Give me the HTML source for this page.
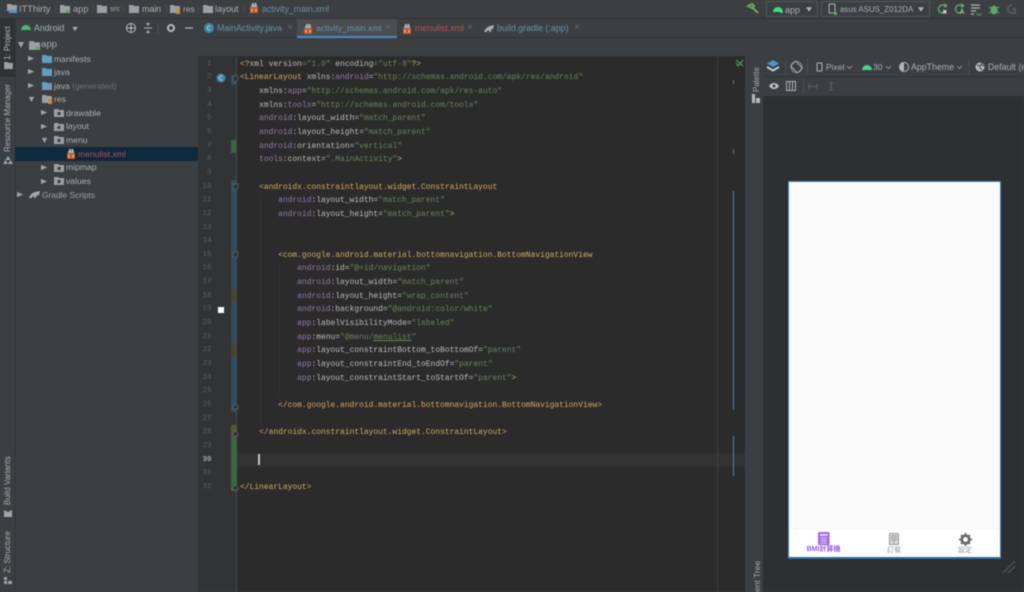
<!DOCTYPE html>
<html><head><meta charset="utf-8">
<style>
html,body{margin:0;padding:0;background:#3c3f41}
#r{position:relative;width:1024px;height:592px;overflow:hidden;background:#3c3f41;font-family:"Liberation Sans",sans-serif;color:#a9b0b4;filter:blur(.45px)}
.a{position:absolute}
.t{position:absolute;white-space:pre;font-size:8.6px;line-height:12px;color:#a9afb2}
.v{position:absolute;white-space:pre;font-size:8px;line-height:10px;color:#a9afb2;transform-origin:0 0;transform:rotate(-90deg)}
.l{position:absolute;left:240px;height:13.65px;white-space:pre;font:7.95px/13.65px "Liberation Mono",monospace;color:#bcbcbc}
.n{position:absolute;left:198px;width:13.5px;text-align:right;height:13.65px;font:7.5px/13.65px "Liberation Mono",monospace;color:#5c6062}
.g{color:#d2ab60}.p{color:#9579a9}.s{color:#668555}
svg{position:absolute;overflow:visible}
</style></head><body><div id="r">
<svg width="0" height="0" style="position:absolute"><defs>
<symbol id="fb" viewBox="0 0 10 8"><path d="M0 0h4l1 1h5v7H0z" fill="#5f9fc4"/></symbol>
<symbol id="fg" viewBox="0 0 10 8"><path d="M0 0h4l1 1h5v7H0z" fill="#9aa0a4"/></symbol>
<symbol id="fp" viewBox="0 0 10 8"><path d="M0 0h4l1 1h5v7H0z" fill="#9aa0a4"/><rect x="3.500" y="3" width="3" height="3" fill="#3c3f41"/></symbol>
<symbol id="x" viewBox="0 0 10 10"><path d="M1 4h8v6H1z" fill="#c75a2a"/><path d="M3 0h2v3H3zM5.500 0h2v3h-2zM2 2h6v2H2z" fill="#a9b0b4"/><path d="M3.500 6l-1 1.200 1 1.200M6.500 6l1 1.200-1 1.200" stroke="#fff" stroke-width=".6" fill="none"/></symbol>
<symbol id="tl" viewBox="0 0 8 8"><path d="M0 1l7 3-7 3z" fill="#9ea4a8"/></symbol>
<symbol id="td" viewBox="0 0 8 8"><path d="M1 1h6l-3 6z" fill="#9ea4a8"/></symbol>
</defs></svg>

<!-- breadcrumb -->
<div class="a" style="left:0;top:18px;width:1024px;height:1px;background:#2f3133"></div>
<svg style="left:7px;top:4px" width="11" height="10"><path d="M0 0h4l1 1h5v6H0z" fill="#9aa0a4"/><rect x="2" y="6" width="8" height="3" fill="#4f93c7"/></svg>
<div class="t" style="left:19px;top:3px;font-size:9.300px">ITThirty</div>
<svg style="left:60px;top:5px;width:10px;height:8px"><use href="#fg"/><rect x="6" y="5" width="3" height="3" fill="#4caf50"/></svg>
<div class="t" style="left:73px;top:3px;font-size:9.300px">app</div>
<svg style="left:97px;top:5px;width:10px;height:8px"><use href="#fg"/></svg>
<div class="t" style="left:110px;top:3px;font-size:7.500px">src</div>
<svg style="left:129px;top:5px;width:10px;height:8px"><use href="#fg"/></svg>
<div class="t" style="left:142px;top:3px;font-size:8.800px">main</div>
<svg style="left:170px;top:5px;width:10px;height:8px"><use href="#fg"/><rect x="6" y="4" width="4" height="5" fill="#c98a3a"/></svg>
<div class="t" style="left:183px;top:3px;font-size:8.500px">res</div>
<svg style="left:203px;top:5px;width:10px;height:8px"><use href="#fg"/></svg>
<div class="t" style="left:215px;top:3px;font-size:8.800px">layout</div>
<svg style="left:249px;top:3px;width:10px;height:10px"><use href="#x"/></svg>
<div class="t" style="left:262px;top:3px;font-size:8.800px;color:#6a8fa8">activity_main.xml</div>
<svg style="left:0;top:0" width="250" height="18"><path d="M54 5l2 4-2 4M92 5l2 4-2 4M122 5l2 4-2 4M165 5l2 4-2 4M197 5l2 4-2 4M243 5l2 4-2 4" stroke="#4f5356" fill="none" stroke-width=".7"/></svg>

<!-- top right toolbar -->
<svg style="left:747px;top:3px" width="14" height="12"><path d="M1 3l4-2 2 2-2 2zM5 4l6 6" stroke="#6aa85a" stroke-width="2" fill="none"/></svg>
<div class="a" style="left:766px;top:1px;width:50px;height:14px;border:1px solid #55595c;border-radius:2px"></div>
<svg style="left:772px;top:4px" width="12" height="9"><path d="M1 8a5 5 0 0 1 10 0z" fill="#3ddc84"/><rect x="8" y="7" width="2.500" height="2" fill="#3ddc84"/></svg>
<div class="t" style="left:785px;top:4px;font-size:9px">app</div>
<svg style="left:806px;top:7px;width:6px;height:5px" viewBox="0 0 8 6"><path d="M0 0h8l-4 6z" fill="#aeb3b6"/></svg>
<div class="a" style="left:821px;top:1px;width:107px;height:14px;border:1px solid #55595c;border-radius:2px"></div>
<svg style="left:828px;top:3px" width="10" height="12"><rect x="1" y="1" width="6" height="9" rx="1" stroke="#aeb3b6" fill="none"/><rect x="6" y="9" width="3" height="3" fill="#4caf50"/></svg>
<div class="t" style="left:840px;top:4px;font-size:7.900px">asus ASUS_Z012DA</div>
<svg style="left:918px;top:7px;width:6px;height:5px" viewBox="0 0 8 6"><path d="M0 0h8l-4 6z" fill="#aeb3b6"/></svg>
<svg style="left:936px;top:3px" width="80" height="13">
<path d="M10 4a4 4 0 1 0 0 4" stroke="#59a869" stroke-width="1.400" fill="none"/><path d="M8 0l4 3-4 2z" fill="#59a869"/><rect x="7" y="7" width="3.500" height="3.500" fill="#c4c8ca"/>
<path d="M27 4a4 4 0 1 0 0 4" stroke="#59a869" stroke-width="1.400" fill="none"/><path d="M25 0l4 3-4 2z" fill="#59a869"/>
<path d="M24 11l2-5 2 5" stroke="#aeb3b6" fill="none" stroke-width=".8"/>
<path d="M35 2h9M35 5h9M35 8h5M35 11h3" stroke="#aeb3b6" stroke-width="1.200"/><path d="M41 10a2 2 0 0 0 4 0" stroke="#59a869" fill="none"/>
<ellipse cx="58" cy="7" rx="3.500" ry="4.500" fill="#59a869"/><path d="M53 4l2 1M63 4l-2 1M53 10l2-1M63 10l-2-1" stroke="#59a869"/>
</svg>
<svg style="left:1005px;top:3px" width="12" height="12"><path d="M7 2a4 4 0 1 0 0 8h3V6H7" stroke="#55595c" stroke-width="2" fill="none"/></svg>

<!-- left strip -->
<div class="a" style="left:0;top:19px;width:15px;height:58px;background:#2f3234"></div>
<div class="a" style="left:15px;top:19px;width:1px;height:573px;background:#323537"></div>
<div class="v" style="left:3px;top:60px;color:#b5babd">1: Project</div>
<svg style="left:4px;top:62px;width:9px;height:7px"><use href="#fg"/></svg>
<div class="v" style="left:3px;top:152px">Resource Manager</div>
<svg style="left:3px;top:156px" width="10" height="8"><path d="M5 0l2.500 4h-5zM0 8l2.500-4L5 8zM5 8l2.500-4L10 8z" fill="#9ea4a8"/></svg>
<div class="v" style="left:3px;top:505px">Build Variants</div>
<svg style="left:4px;top:510px" width="8" height="7"><path d="M0 0l4 2 4-2v7H0z" fill="#9ea4a8"/></svg>
<div class="v" style="left:3px;top:573px">Z: Structure</div>
<svg style="left:4px;top:577px" width="8" height="8"><path d="M0 0h3v3H0zM0 4h3v3H0zM4 4h4v3H4z" fill="#9ea4a8"/></svg>

<!-- project panel header -->
<svg style="left:21px;top:24px" width="10" height="7"><path d="M0 6a5 5 0 0 1 10 0z" fill="#4fb573"/></svg>
<div class="t" style="left:34px;top:22px;font-size:8.800px">Android</div>
<svg style="left:72px;top:27px;width:6px;height:4px" viewBox="0 0 8 6"><path d="M0 0h8l-4 6z" fill="#aeb3b6"/></svg>
<svg style="left:125px;top:22px" width="70" height="13">
<circle cx="6" cy="6" r="4.500" stroke="#b4b9bc" stroke-width="1" fill="none"/><circle cx="6" cy="6" r="1.500" fill="#b4b9bc"/><path d="M6 1v3M6 8v3M1 6h3M8 6h3" stroke="#b4b9bc"/>
<path d="M19 6h8" stroke="#b4b9bc"/><path d="M23 4l-2-3h4zM23 8l-2 3h4z" fill="#b4b9bc"/>
<path d="M33 1v11" stroke="#4f5356"/>
<circle cx="46" cy="6" r="3" stroke="#b4b9bc" stroke-width="2" fill="none"/>
<path d="M60 6h8" stroke="#b4b9bc" stroke-width="1.200"/>
</svg>

<!-- tree -->
<div class="a" style="left:15px;top:147px;width:183px;height:14px;background:#0e293e"></div>
<svg style="left:17px;top:41px;width:8px;height:8px"><use href="#td"/></svg>
<svg style="left:29px;top:41px;width:11px;height:9px"><use href="#fg"/><rect x="7" y="6" width="3" height="3" fill="#4caf50"/></svg>
<div class="t" style="left:41px;top:39px;font-size:9.600px">app</div>

<svg style="left:28px;top:55px;width:7px;height:7px"><use href="#tl"/></svg>
<svg style="left:42px;top:55px;width:10px;height:8px"><use href="#fb"/></svg>
<div class="t" style="left:54px;top:53px">manifests</div>
<svg style="left:28px;top:68px;width:7px;height:7px"><use href="#tl"/></svg>
<svg style="left:42px;top:68px;width:10px;height:8px"><use href="#fb"/></svg>
<div class="t" style="left:54px;top:66px">java</div>
<svg style="left:28px;top:82px;width:7px;height:7px"><use href="#tl"/></svg>
<svg style="left:42px;top:82px;width:10px;height:8px"><use href="#fb"/><circle cx="7" cy="6" r="2" fill="#8c9196"/></svg>
<div class="t" style="left:54px;top:80px">java <span style="color:#6c7174">(generated)</span></div>
<svg style="left:28px;top:96px;width:7px;height:7px"><use href="#td"/></svg>
<svg style="left:42px;top:95px;width:10px;height:8px"><use href="#fg"/><rect x="6" y="4" width="4" height="5" fill="#c98a3a"/></svg>
<div class="t" style="left:54px;top:93px">res</div>
<svg style="left:41px;top:109px;width:7px;height:7px"><use href="#tl"/></svg>
<svg style="left:54px;top:109px;width:10px;height:8px"><use href="#fp"/></svg>
<div class="t" style="left:66px;top:107px">drawable</div>
<svg style="left:41px;top:123px;width:7px;height:7px"><use href="#tl"/></svg>
<svg style="left:54px;top:123px;width:10px;height:8px"><use href="#fp"/></svg>
<div class="t" style="left:66px;top:120px">layout</div>
<svg style="left:41px;top:137px;width:7px;height:7px"><use href="#td"/></svg>
<svg style="left:54px;top:136px;width:10px;height:8px"><use href="#fp"/></svg>
<div class="t" style="left:66px;top:134px">menu</div>
<svg style="left:66px;top:149px;width:10px;height:10px"><use href="#x"/></svg>
<div class="t" style="left:78px;top:148px;color:#b5534f">menulist.xml</div>
<svg style="left:41px;top:164px;width:7px;height:7px"><use href="#tl"/></svg>
<svg style="left:54px;top:164px;width:10px;height:8px"><use href="#fp"/></svg>
<div class="t" style="left:66px;top:161px">mipmap</div>
<svg style="left:41px;top:178px;width:7px;height:7px"><use href="#tl"/></svg>
<svg style="left:54px;top:177px;width:10px;height:8px"><use href="#fp"/></svg>
<div class="t" style="left:66px;top:175px">values</div>
<svg style="left:17px;top:191px;width:7px;height:7px"><use href="#tl"/></svg>
<svg style="left:29px;top:190px" width="12" height="9"><path d="M0 8c1-3 3-5 6-6l5-1-1 4-3 1v2H5V6L3 7v1z" fill="#a4aaad"/></svg>
<div class="t" style="left:42px;top:189px;color:#9ba1a4;font-size:8.400px">Gradle Scripts</div>

<!-- tabs -->
<div class="a" style="left:198px;top:18px;width:826px;height:1px;background:#2f3133"></div>
<div class="a" style="left:198px;top:37px;width:826px;height:1px;background:#323537"></div>
<div class="a" style="left:297px;top:19px;width:100px;height:19px;background:#4a4e50"></div>
<div class="a" style="left:297px;top:36px;width:100px;height:2px;background:#4a88c7"></div>
<svg style="left:204px;top:23px" width="10" height="10"><circle cx="5" cy="5" r="5" fill="#3f86a8"/><path d="M6.500 3.500a2 2 0 1 0 0 3" stroke="#d0e0e8" fill="none" stroke-width=".8"/></svg>
<div class="t" style="left:217px;top:22px;color:#6a8fa8;font-size:8.800px">MainActivity.java</div>
<svg style="left:303px;top:24px;width:10px;height:10px"><use href="#x"/></svg>
<div class="t" style="left:316px;top:22px;color:#6a8fa8;font-size:8.600px">activity_main.xml</div>
<svg style="left:402px;top:24px;width:10px;height:10px"><use href="#x"/></svg>
<div class="t" style="left:415px;top:22px;color:#b5534f;font-size:8.800px">menulist.xml</div>
<svg style="left:484px;top:25px" width="11" height="8"><path d="M0 7c1-3 3-5 6-6l4-1-1 4-2 1v2H5V5L3 6v1z" fill="#a4aaad"/></svg>
<div class="t" style="left:497px;top:22px;color:#6a8fa8;font-size:8.900px">build.gradle (:app)</div>
<svg style="left:0;top:0" width="600" height="40"><path d="M288 25l4 4m0-4l-4 4M386 25l4 4m0-4l-4 4M468 25l4 4m0-4l-4 4M575 25l4 4m0-4l-4 4" stroke="#65696c" stroke-width=".8"/></svg>

<!-- editor -->
<div class="a" style="left:198px;top:57px;width:39px;height:535px;background:#313335"></div>
<div class="a" style="left:237px;top:57px;width:508px;height:535px;background:#2b2b2b"></div>
<div class="a" style="left:198px;top:56px;width:547px;height:1px;background:#2e3032"></div>
<div class="a" style="left:237px;top:453px;width:508px;height:14px;background:#323232"></div>
<div class="a" style="left:236px;top:57px;width:1px;height:535px;background:#46494b"></div>
<div class="a" style="left:717px;top:57px;width:1px;height:535px;background:#3c3f41"></div>

<!-- gutter marks -->
<div class="a" style="left:231px;top:75px;width:5px;height:10px;background:#2e4d62"></div>
<div class="a" style="left:231px;top:140px;width:5px;height:13px;background:#3f6540"></div>
<div class="a" style="left:231px;top:180px;width:5px;height:232px;background:#2e4d62"></div>
<div class="a" style="left:231px;top:289px;width:5px;height:13px;background:#4a4331"></div>
<div class="a" style="left:231px;top:343px;width:5px;height:14px;background:#4a4331"></div>
<div class="a" style="left:231px;top:425px;width:6px;height:14px;background:#55573a"></div>
<div class="a" style="left:231px;top:439px;width:6px;height:52px;background:#3f6540"></div>
<svg style="left:216px;top:73px" width="10" height="10"><circle cx="5" cy="5" r="4.500" fill="#3f86a8"/><path d="M6.500 3.500a2 2 0 1 0 0 3" stroke="#d0e0e8" fill="none" stroke-width=".8"/></svg>
<div class="a" style="left:218px;top:307px;width:6px;height:6px;background:#fff"></div>
<svg style="left:232px;top:74px" width="8" height="420">
<path d="M1 2h5v4L3.500 8 1 6zM1 110h5v4l-2.500 2L1 114zM1 178h5v4l-2.500 2L1 182z" fill="#313335" stroke="#62676a" stroke-width=".7"/>
<path d="M1 335h5v-3l-2.500-2L1 332zM1 362h5v-3l-2.500-2L1 359zM1 416h5v-3l-2.500-2L1 413z" fill="#313335" stroke="#62676a" stroke-width=".7"/>
</svg>
<!-- indent guides -->
<div class="a" style="left:259.500px;top:194px;width:1px;height:231px;background:#343434"></div>
<div class="a" style="left:278.500px;top:262px;width:1px;height:137px;background:#343434"></div>

<!-- line numbers -->
<div class="n" style="top:57.700px">1</div><div class="n" style="top:71.350px">2</div><div class="n" style="top:85px">3</div><div class="n" style="top:98.650px">4</div><div class="n" style="top:112.300px">5</div><div class="n" style="top:125.950px">6</div><div class="n" style="top:139.600px">7</div><div class="n" style="top:153.250px">8</div><div class="n" style="top:166.900px">9</div><div class="n" style="top:180.550px">10</div><div class="n" style="top:194.200px">11</div><div class="n" style="top:207.850px">12</div><div class="n" style="top:221.500px">13</div><div class="n" style="top:235.150px">14</div><div class="n" style="top:248.800px">15</div><div class="n" style="top:262.450px">16</div><div class="n" style="top:276.100px">17</div><div class="n" style="top:289.750px">18</div><div class="n" style="top:303.400px">19</div><div class="n" style="top:317.050px">20</div><div class="n" style="top:330.700px">21</div><div class="n" style="top:344.350px">22</div><div class="n" style="top:358px">23</div><div class="n" style="top:371.650px">24</div><div class="n" style="top:385.300px">25</div><div class="n" style="top:398.950px">26</div><div class="n" style="top:412.600px">27</div><div class="n" style="top:426.250px">28</div><div class="n" style="top:439.900px">29</div><div class="n" style="top:453.550px;color:#a4a8aa;font-weight:700">30</div><div class="n" style="top:467.200px">31</div><div class="n" style="top:480.850px">32</div>

<!-- code -->
<div class="l" style="top:57.700px"><span class="g">&lt;?</span>xml version<span class="s">=</span><span class="s">"1.0"</span> encoding<span class="s">=</span><span class="s">"utf-8"</span><span class="g">?&gt;</span></div>
<div class="l" style="top:71.350px"><span class="g">&lt;LinearLayout</span> xmlns:<span class="p">android</span>=<span class="s">"http://schemas.android.com/apk/res/android"</span></div>
<div class="l" style="top:85px">    xmlns:<span class="p">app</span>=<span class="s">"http://schemas.android.com/apk/res-auto"</span></div>
<div class="l" style="top:98.650px">    xmlns:<span class="p">tools</span>=<span class="s">"http://schemas.android.com/tools"</span></div>
<div class="l" style="top:112.300px">    <span class="p">android</span>:layout_width=<span class="s">"match_parent"</span></div>
<div class="l" style="top:125.950px">    <span class="p">android</span>:layout_height=<span class="s">"match_parent"</span></div>
<div class="l" style="top:139.600px">    <span class="p">android</span>:orientation=<span class="s">"vertical"</span></div>
<div class="l" style="top:153.250px">    <span class="p">tools</span>:context=<span class="s">".MainActivity"</span><span class="g">&gt;</span></div>
<div class="l" style="top:180.550px">    <span class="g">&lt;androidx.constraintlayout.widget.ConstraintLayout</span></div>
<div class="l" style="top:194.200px">        <span class="p">android</span>:layout_width=<span class="s">"match_parent"</span></div>
<div class="l" style="top:207.850px">        <span class="p">android</span>:layout_height=<span class="s">"match_parent"</span><span class="g">&gt;</span></div>
<div class="l" style="top:248.800px">        <span class="g">&lt;com.google.android.material.bottomnavigation.BottomNavigationView</span></div>
<div class="l" style="top:262.450px">            <span class="p">android</span>:id=<span class="s">"@+id/navigation"</span></div>
<div class="l" style="top:276.100px">            <span class="p">android</span>:layout_width=<span class="s">"match_parent"</span></div>
<div class="l" style="top:289.750px">            <span class="p">android</span>:layout_height=<span class="s">"wrap_content"</span></div>
<div class="l" style="top:303.400px">            <span class="p">android</span>:background=<span class="s">"@android:color/white"</span></div>
<div class="l" style="top:317.050px">            <span class="p">app</span>:labelVisibilityMode=<span class="s">"labeled"</span></div>
<div class="l" style="top:330.700px">            <span class="p">app</span>:menu=<span class="s">"@menu/<u>menulist</u>"</span></div>
<div class="l" style="top:344.350px">            <span class="p">app</span>:layout_constraintBottom_toBottomOf=<span class="s">"parent"</span></div>
<div class="l" style="top:358px">            <span class="p">app</span>:layout_constraintEnd_toEndOf=<span class="s">"parent"</span></div>
<div class="l" style="top:371.650px">            <span class="p">app</span>:layout_constraintStart_toStartOf=<span class="s">"parent"</span><span class="g">&gt;</span></div>
<div class="l" style="top:398.950px">        <span class="g">&lt;/com.google.android.material.bottomnavigation.BottomNavigationView&gt;</span></div>
<div class="l" style="top:426.250px">    <span class="g">&lt;/androidx.constraintlayout.widget.ConstraintLayout&gt;</span></div>
<div class="l" style="top:480.850px"><span class="g">&lt;/LinearLayout&gt;</span></div>
<div class="a" style="left:258px;top:454px;width:1.500px;height:11px;background:#c4c4c4"></div>

<!-- error stripe -->
<svg style="left:736px;top:59px" width="8" height="8"><path d="M0 4l2 3 5-6M0 1l7 6" stroke="#59a869" fill="none" stroke-width="1"/></svg>
<div class="a" style="left:733px;top:80px;width:1px;height:4px;background:#4a82b2"></div>
<div class="a" style="left:733px;top:149px;width:1px;height:5px;background:#4d8a55"></div>
<div class="a" style="left:733px;top:191px;width:1px;height:219px;background:#4a82b2"></div>
<div class="a" style="left:733px;top:436px;width:1px;height:40px;background:#4a82b2"></div>

<!-- palette strip -->
<div class="a" style="left:745px;top:57px;width:18px;height:535px;background:#3c3f41"></div>
<div class="v" style="left:752px;top:92px;color:#a4aaad">Palette</div>
<svg style="left:752px;top:94px" width="9" height="9"><path d="M0 0h3v9H0zM4 4h4v5H4z" fill="#b4b9bc"/></svg>
<div class="v" style="left:752px;top:592px;color:#a4aaad;font-size:8.500px">ent Tree</div>

<!-- design area -->
<div class="a" style="left:763px;top:57px;width:261px;height:535px;background:#2d2f31"></div>
<div class="a" style="left:763px;top:57px;width:261px;height:39px;background:#3c3f41"></div>
<div class="a" style="left:763px;top:76px;width:261px;height:1px;background:#323537"></div>
<svg style="left:767px;top:60px" width="14" height="14"><path d="M6 0l6 3.500-6 3.500-6-3.500z" fill="#4e93cc"/><path d="M0 6l6 3.500 6-3.500v2l-6 3.500-6-3.500z" fill="#c6e0f2"/></svg>
<svg style="left:790px;top:61px" width="13" height="13"><rect x="3" y="1" width="7" height="10" rx="1" transform="rotate(-45 6.500 6)" stroke="#aeb3b6" fill="none"/><circle cx="6.500" cy="6" r="5.500" stroke="#aeb3b6" fill="none" stroke-width=".6"/></svg>
<div class="a" style="left:784.500px;top:59px;width:1px;height:15px;background:#4b4f52"></div>
<div class="a" style="left:806.500px;top:59px;width:1px;height:15px;background:#4b4f52"></div>
<svg style="left:816px;top:62px" width="8" height="10"><rect x="1" y="1" width="5" height="8" rx="1" stroke="#b4b9bc" fill="none"/></svg>
<div class="t" style="left:826px;top:61px;font-size:8.500px">Pixel</div>
<svg style="left:0;top:0" width="1024" height="80"><path d="M847 66l2.500 2.500L852 66M886 66l2.500 2.500L891 66M957 66l2.500 2.500L962 66" stroke="#9ea4a8" fill="none" stroke-width=".8"/></svg>
<svg style="left:862px;top:63px" width="10" height="7"><path d="M0 7a5 5 0 0 1 10 0z" fill="#3ddc84"/></svg>
<div class="t" style="left:873px;top:61px;font-size:8.500px">30</div>
<svg style="left:899px;top:62px" width="10" height="10"><circle cx="5" cy="5" r="4.500" stroke="#b4b9bc" fill="none"/><path d="M5 1a4 4 0 0 0 0 8z" fill="#b4b9bc"/></svg>
<div class="t" style="left:911px;top:61px;font-size:8.800px">AppTheme</div>
<div class="a" style="left:967.500px;top:59px;width:1px;height:15px;background:#4b4f52"></div>
<svg style="left:975px;top:62px" width="10" height="10"><circle cx="5" cy="5" r="4.500" fill="#b4b9bc"/><path d="M2 3l3 1v2l2 2M7 1L6 3l3 1" stroke="#3c3f41" fill="none"/></svg>
<div class="t" style="left:988px;top:61px;font-size:8.800px">Default (e</div>
<svg style="left:769px;top:82px" width="11" height="10"><path d="M0 4c3-4 7-4 10 0-3 4-7 4-10 0z" fill="#c2c6c9"/><circle cx="5" cy="4" r="1.500" fill="#3c3f41"/></svg>
<svg style="left:786px;top:81px" width="11" height="11"><path d="M.5.500h9v9h-9zM3.500.500v9M6.500.500v9" stroke="#a9aeb1" fill="none"/></svg>
<div class="a" style="left:802.500px;top:79px;width:1px;height:14px;background:#4b4f52"></div>
<svg style="left:808px;top:81px" width="30" height="11"><path d="M1 5.500h8M1 3v5M9 3v5" stroke="#606467" fill="none"/><path d="M23 1v8M21 2h4M21 9h4" stroke="#606467" fill="none"/></svg>

<!-- device preview -->
<div class="a" style="left:788px;top:181px;width:211px;height:375px;border:1px solid #3f86c4;border-bottom:2px solid #2d6a9f;background:#fafafa"></div>
<div class="a" style="left:789px;top:528.500px;width:211px;height:28px;background:#fff"></div>
<svg style="left:818px;top:532px" width="11.500" height="13"><rect width="11.500" height="13" rx="1" fill="#a065ea"/><rect x="2" y="2" width="7.500" height="2" fill="#e6d8fa"/><path d="M2 6h7.500M2 8.500h7.500M2 11h7.500M4.500 5.500v6M7 5.500v6" stroke="#e0cff8" stroke-width=".7"/></svg>
<div class="a" style="left:794px;top:545px;width:59px;text-align:center;font:700 7px/10px 'Liberation Sans','Noto Sans CJK TC',sans-serif;color:#9a5be6">BMI計算機</div>
<svg style="left:889px;top:533px" width="10" height="12"><rect x=".5" y=".5" width="9" height="11" fill="#d8d8d8" stroke="#9a9a9a"/><path d="M2 3h6M2 5h6M2 7h6M5 7v4" stroke="#9a9a9a"/></svg>
<div class="a" style="left:874px;top:546px;width:40px;text-align:center;font:7px/10px 'Liberation Sans','Noto Sans CJK TC',sans-serif;color:#9a9a9a">訂餐</div>
<svg style="left:959px;top:533px" width="13" height="13"><circle cx="6.500" cy="6.500" r="3.800" fill="none" stroke="#686868" stroke-width="2.800"/><path d="M6.500 0v2.500M6.500 10.500V13M0 6.500h2.500M10.500 6.500H13M2 2l1.700 1.700M9.300 9.300L11 11M11 2L9.300 3.700M3.700 9.300L2 11" stroke="#686868" stroke-width="1.800"/></svg>
<div class="a" style="left:945px;top:546px;width:40px;text-align:center;font:7px/10px 'Liberation Sans','Noto Sans CJK TC',sans-serif;color:#9a9a9a">設定</div>
<svg style="left:1002px;top:560px" width="14" height="14"><path d="M1 13L13 1M6 13l7-7" stroke="#6a6e71" stroke-width=".8"/></svg>
</div></body></html>
